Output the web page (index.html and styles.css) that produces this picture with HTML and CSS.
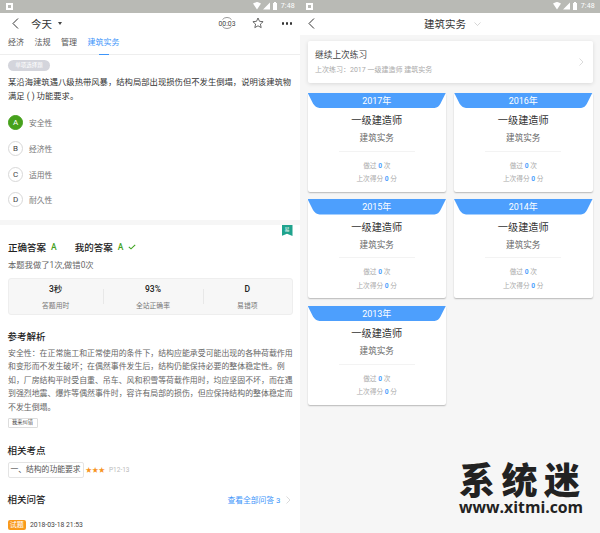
FILE: index.html
```html
<!DOCTYPE html>
<html lang="zh-CN">
  <head>
    <meta charset="utf-8" />
    <link rel="stylesheet" href="styles.css">
  </head>

  <body>
    <!-- левый экран: вопрос -->
    <div class="screen question-screen">
      <div class="status">
        <svg class="note" width="7" height="7" viewBox="0 0 7 7"><path fill="#fff" fill-rule="evenodd" d="M0 0h7v7H0zM2 2v3h3V2z"/></svg>
        <svg width="26" height="8" viewBox="0 0 26 8"><path fill="#fff" d="M0 1.500C2 .5 4-.1 4-.1s2 .6 4 1.600L4 7.500zM17 .5v7h-7zM20 1h1V0h2v1h1v7h-4z"/></svg>
        <span class="clock">7:48</span>
      </div>
      <div class="topbar">
        <svg class="back" width="7" height="11" viewBox="0 0 7 11"><path fill="none" stroke="#333" d="M6 .5 1 5.500l5 5"/></svg>
        <span class="today">今天</span>
        <span class="caret"></span>
        <div class="tools">
          <svg class="timer" width="20" height="12" viewBox="0 0 20 12">
            <path fill="none" stroke="#555" stroke-width=".6" d="M5.500 2.500A6 6 0 0 1 14.500 2.500M5.500 9.500A6 6 0 0 0 14.500 9.500"/>
            <text x="10" y="8.500" text-anchor="middle" font-size="6.800" fill="#444" font-family="Roboto">00:03</text>
          </svg>
          <svg class="star" width="12" height="12" viewBox="0 0 12 12"><path fill="none" stroke="#444" stroke-width=".8" d="M6 1l1.500 3.300 3.600.4-2.700 2.400.8 3.500L6 8.800l-3.200 1.800.8-3.500L.9 4.700l3.600-.4z"/></svg>
          <span class="dots"><i></i><i></i><i></i></span>
        </div>
      </div>
      <div class="tabs">
        <span>经济</span>
        <span>法规</span>
        <span>管理</span>
        <span class="tab-active">建筑实务</span>
      </div>

      <div class="question">
        <span class="qtype">单项选择题</span>
        <p class="qtext">某沿海建筑遇八级热带风暴，结构局部出现损伤但不发生倒塌，说明该建筑物满足 ( ) 功能要求。</p>
        <div class="option"><span class="letter letter-right">A</span>安全性</div>
        <div class="option"><span class="letter">B</span>经济性</div>
        <div class="option"><span class="letter">C</span>适用性</div>
        <div class="option"><span class="letter">D</span>耐久性</div>
      </div>

      <div class="band"></div>

      <div class="answer">
        <span class="ribbon">易</span>
        <div class="answer-row">
          <span class="answer-name">正确答案</span><span class="answer-val">A</span>
          <span class="answer-name my">我的答案</span><span class="answer-val">A</span>
          <svg width="8" height="6" viewBox="0 0 8 6"><path fill="none" stroke="#3fa31e" stroke-width="1.100" d="M.8 2.800 3 4.800 7.200.8"/></svg>
        </div>
        <div class="answer-count">本题我做了1次,做错0次</div>
        <div class="stats">
          <div class="stat stat-time"><b>3秒</b><span>答题用时</span></div>
          <div class="stat stat-rate"><b>93%</b><span>全站正确率</span></div>
          <div class="stat stat-wrong"><b>D</b><span>易错项</span></div>
        </div>

        <h3 class="block-title">参考解析</h3>
        <p class="analysis">安全性：在正常施工和正常使用的条件下，结构应能承受可能出现的各种荷载作用和变形而不发生破坏；在偶然事件发生后，结构仍能保持必要的整体稳定性。例如，厂房结构平时受自重、吊车、风和积雪等荷载作用时，均应坚固不坏，而在遇到强烈地震、爆炸等偶然事件时，容许有局部的损伤，但应保持结构的整体稳定而不发生倒塌。</p>
        <span class="report">我来纠错</span>

        <h3 class="block-title point-title">相关考点</h3>
        <div class="point">
          <span class="point-tag">一、结构的功能要求</span>
          <span class="stars">★★★</span>
          <span class="pages">P12-13</span>
        </div>

        <div class="qa-head">
          <h3 class="block-title">相关问答</h3>
          <span class="qa-all">查看全部问答 3</span>
          <svg width="5" height="8" viewBox="0 0 5 8"><path fill="none" stroke="#ccc" stroke-width=".7" d="M.5.500 4 4 .5 7.500"/></svg>
        </div>
        <div class="qa-item"><span class="qa-badge">试题</span>2018-03-18 21:53</div>
      </div>
    </div>

    <!-- правый экран: годы -->
    <div class="screen years-screen">
      <div class="status">
        <svg class="note" width="7" height="7" viewBox="0 0 7 7"><path fill="#fff" fill-rule="evenodd" d="M0 0h7v7H0zM2 2v3h3V2z"/></svg>
        <svg width="26" height="8" viewBox="0 0 26 8"><path fill="#fff" d="M0 1.500C2 .5 4-.1 4-.1s2 .6 4 1.600L4 7.500zM17 .5v7h-7zM20 1h1V0h2v1h1v7h-4z"/></svg>
        <span class="clock">7:48</span>
      </div>
      <div class="years-bar">
        <svg class="years-back" width="7" height="11" viewBox="0 0 7 11"><path fill="none" stroke="#333" d="M6 .5 1 5.500l5 5"/></svg>
        <span class="years-title">建筑实务</span>
        <svg class="years-down" width="7" height="4" viewBox="0 0 7 4"><path fill="none" stroke="#bbb" stroke-width=".6" d="M.5.500 3.500 3.500 6.500.5"/></svg>
      </div>

      <div class="resume">
        <div>
          <div class="resume-title">继续上次练习</div>
          <div class="resume-sub">上次练习：2017 一级建造师 建筑实务</div>
        </div>
        <svg width="5" height="8" viewBox="0 0 5 8"><path fill="none" stroke="#ccc" stroke-width=".7" d="M.5.500 4 4 .5 7.500"/></svg>
      </div>

      <div class="cards">
        <div class="card">
          <div class="card-year">2017年</div>
          <div class="card-name">一级建造师</div>
          <div class="card-subject">建筑实务</div>
          <div class="card-line"></div>
          <div class="card-info">做过 <b>0</b> 次</div>
          <div class="card-info">上次得分 <b>0</b> 分</div>
        </div>
        <div class="card">
          <div class="card-year">2016年</div>
          <div class="card-name">一级建造师</div>
          <div class="card-subject">建筑实务</div>
          <div class="card-line"></div>
          <div class="card-info">做过 <b>0</b> 次</div>
          <div class="card-info">上次得分 <b>0</b> 分</div>
        </div>
        <div class="card">
          <div class="card-year">2015年</div>
          <div class="card-name">一级建造师</div>
          <div class="card-subject">建筑实务</div>
          <div class="card-line"></div>
          <div class="card-info">做过 <b>0</b> 次</div>
          <div class="card-info">上次得分 <b>0</b> 分</div>
        </div>
        <div class="card">
          <div class="card-year">2014年</div>
          <div class="card-name">一级建造师</div>
          <div class="card-subject">建筑实务</div>
          <div class="card-line"></div>
          <div class="card-info">做过 <b>0</b> 次</div>
          <div class="card-info">上次得分 <b>0</b> 分</div>
        </div>
        <div class="card">
          <div class="card-year">2013年</div>
          <div class="card-name">一级建造师</div>
          <div class="card-subject">建筑实务</div>
          <div class="card-line"></div>
          <div class="card-info">做过 <b>0</b> 次</div>
          <div class="card-info">上次得分 <b>0</b> 分</div>
        </div>
      </div>

      <div class="mark">
        <div class="mark-name">系统迷</div>
        <div class="mark-url">www.xitmi.com</div>
      </div>
    </div>
  </body>
</html>
```

FILE: styles.css
```css
* {
  box-sizing: border-box;
}

html,
body {
  margin: 0;
  height: 533px;
  overflow: hidden;
}

body {
  display: flex;
  font-family: Roboto, "Noto Sans CJK SC", sans-serif;
  color: #333;
}

.screen {
  position: relative;
  width: 300px;
  height: 533px;
  overflow: hidden;
}

.question-screen {
  background: #fff;
}

.years-screen {
  background: #f6f6f6;
}

/* статус-бар */
.status {
  display: flex;
  align-items: center;
  height: 12.500px;
  padding: 0 5px 0 6px;
  background: #b9bab5;
}

.status .note {
  margin-right: auto;
}

.clock {
  margin-left: 2px;
  font-size: 7px;
  letter-spacing: .2px;
  color: #fff;
}

/* шапка вопроса */
.topbar {
  display: flex;
  align-items: center;
  height: 21.500px;
  padding: 0 8px 0 12px;
}

.today {
  margin-left: 12px;
  font-size: 10.500px;
}

.caret {
  width: 0;
  height: 0;
  margin-left: 6px;
  border: 2px solid transparent;
  border-top: 3px solid #444;
  border-bottom: 0;
}

.tools {
  display: flex;
  align-items: center;
  margin-left: auto;
}

.timer {
  margin-right: 15px;
}

.star {
  margin-right: 18px;
}

.dots {
  display: flex;
  gap: 1.500px;
}

.dots i {
  width: 2.500px;
  height: 2.500px;
  border-radius: 50%;
  background: #333;
}

.tabs {
  display: flex;
  gap: 10.500px;
  height: 20.500px;
  padding: 2px 8px 0;
  border-bottom: 1px solid #eee;
  font-size: 8px;
  line-height: 14px;
  color: #555;
}

.tab-active {
  position: relative;
  color: #3d95fa;
}

.tab-active::after {
  content: "";
  position: absolute;
  left: 11px;
  bottom: -1px;
  width: 10px;
  height: 1px;
  background: #3d95fa;
}

/* вопрос */
.question {
  height: 165.500px;
  padding: 5.500px 8px 0;
}

.qtype {
  display: block;
  width: 42px;
  height: 11px;
  border-radius: 6px;
  background: #d4d5dc;
  font-size: 5.500px;
  line-height: 11px;
  text-align: center;
  color: #fff;
}

.qtext {
  margin: 4px 0 7px;
  font-size: 8.330px;
  line-height: 14px;
  color: #333;
}

.option {
  display: flex;
  align-items: center;
  gap: 6px;
  height: 25.700px;
  font-size: 7.800px;
  color: #777;
}

.letter {
  width: 15px;
  height: 15px;
  border: 1px solid #d8d8d8;
  border-radius: 50%;
  font-size: 8px;
  line-height: 13px;
  text-align: center;
  color: #444;
}

.letter-right {
  border-color: #46a11c;
  background: #46a11c;
  color: #fff;
}

.band {
  height: 5px;
  background: #f6f6f6;
}

/* ответ */
.answer {
  position: relative;
  padding: 15px 7.500px 0;
}

.ribbon {
  position: absolute;
  top: 0;
  right: 7.500px;
  width: 11px;
  height: 11px;
  background: #1fa38d;
  clip-path: polygon(0 0, 100% 0, 100% 100%, 50% 80%, 0 100%);
  font-size: 5px;
  line-height: 9px;
  text-align: center;
  color: #fff;
}

.answer-row {
  display: flex;
  align-items: center;
  height: 14px;
  padding-left: .5px;
  font-size: 9.500px;
}

.answer-name {
  font-weight: 500;
  color: #222;
}

.answer-val {
  margin: 0 5px;
  font-size: 8.500px;
  font-weight: 500;
  color: #46a11c;
}

.my {
  margin-left: 13px;
}

.answer-count {
  margin: 5px 0 6px .5px;
  font-size: 8.300px;
  line-height: 13px;
  color: #666;
}

.stats {
  display: flex;
  height: 37px;
  border: 1px solid #eee;
  border-radius: 3px;
  background: #f7f7f7;
}

.stat {
  display: flex;
  flex-direction: column;
  align-items: center;
  gap: 5px;
  padding-top: 5px;
  font-size: 6.800px;
  color: #777;
}

.stat-time {
  width: 95px;
}

.stat-rate {
  width: 101px;
}

.stat-wrong {
  width: 89px;
}

.stat b {
  font-size: 8.500px;
  font-weight: 500;
  line-height: 11px;
  color: #222;
}

.stat + .stat {
  position: relative;
}

.stat + .stat::before {
  content: "";
  position: absolute;
  left: 0;
  top: 10px;
  height: 15px;
  border-left: 1px solid #e8e8e8;
}

.block-title {
  margin: 0;
  font-size: 9.500px;
  font-weight: 500;
  line-height: 14px;
  color: #222;
}

.stats + .block-title {
  margin-top: 15px;
}

.analysis {
  width: 286px;
  margin: 3px 0 4px .5px;
  font-size: 7.920px;
  line-height: 13.400px;
  color: #666;
}

.report {
  display: block;
  width: 30px;
  height: 9.500px;
  border: 1px solid #ddd;
  border-radius: 1px;
  font-size: 5.200px;
  line-height: 7.500px;
  text-align: center;
  color: #444;
}

.point-title {
  margin-top: 16px;
}

.point {
  display: flex;
  align-items: center;
  margin-top: 4px;
  height: 16px;
}

.point-tag {
  width: 76px;
  height: 16px;
  border: 1px solid #e4e4e4;
  border-radius: 2px;
  font-size: 7.800px;
  line-height: 14px;
  text-align: center;
  color: #555;
}

.stars {
  margin: -2px 0 0 2px;
  font-size: 6.500px;
  color: #f7941d;
}

.pages {
  margin-left: 3px;
  padding-left: 1px;
  font-size: 6.500px;
  color: #bbb;
}

.qa-head {
  display: flex;
  align-items: center;
  margin-top: 15px;
}

.qa-all {
  margin: 0 5px 0 auto;
  font-size: 7.800px;
  color: #3d95fa;
}

.qa-head svg {
  margin-right: 2px;
}

.qa-item {
  display: flex;
  align-items: center;
  margin-top: 13px;
  font-size: 6.800px;
  color: #444;
}

.qa-badge {
  width: 18.500px;
  height: 10px;
  margin-right: 4px;
  border-radius: 2px;
  background: #f99a1c;
  font-size: 7px;
  line-height: 10px;
  text-align: center;
  color: #fff;
}

/* правый экран */
.years-bar {
  display: flex;
  align-items: center;
  justify-content: center;
  position: relative;
  height: 22px;
  padding-right: 10px;
  background: #fff;
}

.years-back {
  position: absolute;
  left: 8px;
}

.years-title {
  font-size: 10.500px;
  color: #333;
}

.years-down {
  position: absolute;
  left: 174px;
}

.resume {
  display: flex;
  align-items: center;
  justify-content: space-between;
  height: 41.500px;
  margin: 6.500px 7.500px 0;
  padding: 0 9px 0 7.500px;
  border-radius: 2px;
  background: #fff;
  box-shadow: 0 1px 4px rgba(0, 0, 0, .12);
}

.resume-title {
  font-size: 8.700px;
  line-height: 13px;
  color: #444;
}

.resume-sub {
  margin-top: 3px;
  font-size: 7px;
  line-height: 10px;
  color: #aaa;
}

.cards {
  display: grid;
  grid-template-columns: 138.500px 138.500px;
  grid-auto-rows: 99px;
  gap: 7.500px 8px;
  margin: 10px 7.500px 0;
}

.card {
  border-radius: 2px;
  background: #fff;
  box-shadow: 0 1px 1.500px rgba(0, 0, 0, .25);
  text-align: center;
}

.card-year {
  height: 15.500px;
  background: #4d9ffd;
  clip-path: path("M0 0H138.500L133 11Q131 15 127 15.500H12Q8 15 5.500 11Z");
  font-size: 9px;
  line-height: 16px;
  color: #fff;
}

.card-name {
  margin-top: 5px;
  font-size: 10.200px;
  line-height: 15px;
  color: #333;
}

.card-subject {
  margin-top: 4px;
  font-size: 8.600px;
  line-height: 13px;
  color: #666;
}

.card-line {
  width: 76px;
  margin: 5.500px auto 8px;
  border-top: 1px solid #f3f3f3;
}

.card-info {
  font-size: 6.700px;
  line-height: 13.500px;
  color: #aaa;
}

.card-info b {
  color: #4d9ffd;
}

/* водяной знак поверх экрана */
.mark {
  position: absolute;
  left: 159px;
  top: 459px;
  width: 124px;
  white-space: nowrap;
  color: #222;
}

.mark-name {
  font-family: "Noto Sans CJK SC", sans-serif;
  font-size: 36px;
  font-weight: 900;
  line-height: 39px;
  letter-spacing: 6.500px;
}

.mark-url {
  font-family: "Open Sans", sans-serif;
  font-size: 15.800px;
  font-weight: 700;
  line-height: 18px;
}
```
